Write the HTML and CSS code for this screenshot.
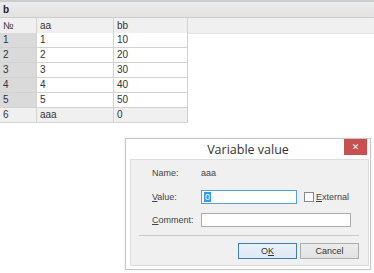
FILE: index.html
```html
<!DOCTYPE html>
<html lang="en">
<head>
  <meta charset="UTF-8">
  <title>Variable value</title>
<link rel="stylesheet" href="styles.css">
</head>
<body>
  <div class="topline"></div>
  <div class="caption">b</div>

  <!-- table -->
  <div class="grid">
    <div class="cell head">№</div><div class="cell head">aa</div><div class="cell head">bb</div><div class="fill head"></div>
    <div class="cell num">1</div><div class="cell">1</div><div class="cell">10</div><div class="fill"></div>
    <div class="cell num">2</div><div class="cell">2</div><div class="cell">20</div><div class="fill"></div>
    <div class="cell num">3</div><div class="cell">3</div><div class="cell">30</div><div class="fill"></div>
    <div class="cell num">4</div><div class="cell">4</div><div class="cell">40</div><div class="fill"></div>
    <div class="cell num">5</div><div class="cell">5</div><div class="cell">50</div><div class="fill"></div>
    <div class="cell newrow">6</div><div class="cell newrow">aaa</div><div class="cell newrow">0</div><div class="fill"></div>
  </div>

  <!-- dialog -->
  <div class="dlg">
    <div class="dlg-title">Variable value
      <span class="close">&#x2715;</span>
    </div>
    <div class="dlg-body">
      <div class="row name">
        <span class="lbl">Name:</span><span class="val">aaa</span>
      </div>
      <div class="row">
        <span class="lbl"><u>V</u>alue:</span>
        <span class="inp short focus"><span class="sel">0</span></span>
        <span class="chk"></span><span class="chk-lbl"><u>E</u>xternal</span>
      </div>
      <div class="row">
        <span class="lbl"><u>C</u>omment:</span>
        <span class="inp long"></span>
      </div>
      <div class="sep"></div>
      <div class="btns">
        <span class="btn def">O<u>K</u></span>
        <span class="btn">Cancel</span>
      </div>
    </div>
  </div>
</body>
</html>
```
FILE: styles.css
```css
*{margin: 0;padding: 0;box-sizing: border-box;}
body{
  background: #fff;
  font-family: "Liberation Sans", Arial, sans-serif;
  font-size: 10px;
  color: #333;
}
.topline{
  height: 2px;
  background: #c9cdd4;
}
.caption{
  height: 16px;
  line-height: 15px;
  padding-left: 3px;
  font-weight: bold;
  color: #222;
  background: linear-gradient(#ececec, #e2e2e2);
  border-bottom: 1px solid #cdcdcd;
}
.grid{
  display: grid;
  grid-template-columns: 37px 77px 74px 1fr;
  grid-auto-rows: 15px;
}
.grid .cell{
  border-right: 1px solid #d2d2d2;
  border-bottom: 1px solid #d2d2d2;
  padding-left: 3px;
  line-height: 14px;
  background: #fff;
}
.grid .head{
  background: #f0f0f0;
  height: 16px;
  line-height: 15px;
}
.grid .fill.head{
  border-bottom: 1px solid #e4e4e4;
}
.grid .num{
  background: #dadada;
}
.grid .newrow{
  background: #f0f0f0;
}

.dlg{
  position: absolute;
  left: 125px;top: 138px;
  width: 246px;height: 132px;
  background: #fff;
  border: 1px solid #c6c6c6;
  box-shadow: 0 0 3px rgba(0,0,0,0.08);
}
.dlg-title{
  position: relative;
  height: 20px;
  line-height: 22px;
  text-align: center;
  font-family: "Open Sans", "Noto Sans", sans-serif;
  font-size: 12.5px;
  color: #333;
}
.dlg-title .close{
  position: absolute;
  top: 0;right: 3px;
  width: 23px;height: 16px;
  line-height: 16px;
  background: #c75050;
  color: #fff;
  font-family: "DejaVu Sans", sans-serif;
  font-size: 9px;
  font-weight: bold;
}
.dlg-body{
  margin: 0 1px 0 4px;
  height: 107px;
  background: #f0f0f0;
  border: 1px solid #dedede;
  padding: 0 9px 0 21px;
  font-size: 9px;
  color: #444;
}
.row{
  display: flex;
  align-items: center;
  height: 14px;
  margin-top: 9px;
}
.row.name{
  margin-top: 7px;
  height: 12px;
}
.row.name + .row{
  margin-top: 11px;
}
.lbl{
  width: 49px;
}
.inp{
  height: 14px;
  background: #fff;
  border: 1px solid #abadb3;
  padding: 1px 2px;
  line-height: 10px;
}
.inp.short{width: 96px;}
.inp.long{width: 150px;}
.inp.focus{border-color: #5a9ee0;}
.sel{
  display: inline-block;
  background: #3399ff;
  color: #fff;
  padding: 0 1px;
}
.chk{
  width: 10px;height: 10px;
  margin-left: 7px;
  background: #fff;
  border: 1px solid #8a8a8a;
}
.chk-lbl{
  margin-left: 2px;
}
.sep{
  height: 1px;
  background: #c9c9c9;
  margin: 8px 0 0 -13px;
}
.btns{
  display: flex;
  justify-content: flex-end;
  gap: 3px;
  margin-top: 7px;
}
.btn{
  width: 59px;height: 16px;
  line-height: 14px;
  text-align: center;
  background: linear-gradient(#ececec, #e2e2e2);
  border: 1px solid #adadad;
  color: #333;
}
.btn.def{
  border-color: #3c7fb1;
  background: linear-gradient(#e8f1fa, #dfe9f3);
}
```
